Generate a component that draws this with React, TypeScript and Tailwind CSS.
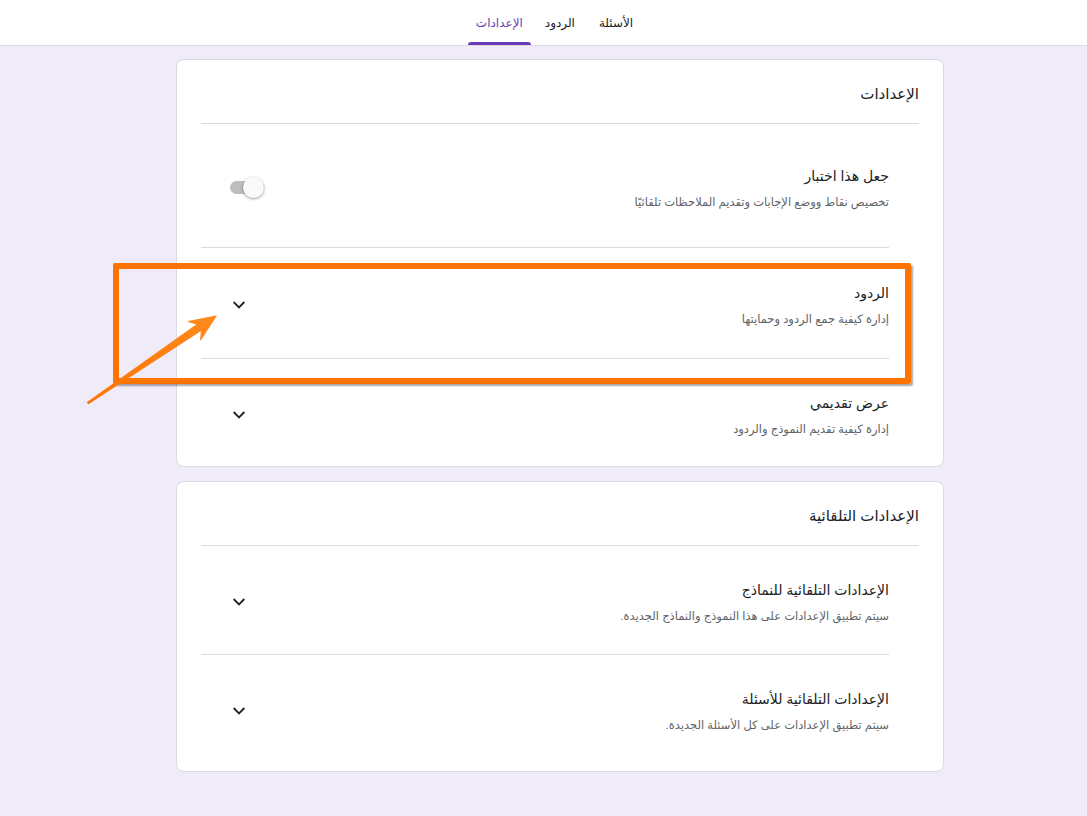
import React from "react";

const font = { fontFamily: '"Liberation Sans", "DejaVu Sans", sans-serif' };

const Chevron: React.FC = () => (
  <svg width="16" height="16" viewBox="0 0 24 24" fill="none">
    <path d="M5 8.5l7 7 7-7" stroke="#202124" strokeWidth="2.8" strokeLinecap="square" />
  </svg>
);

const Toggle: React.FC = () => (
  <div className="relative w-[38px] h-[22px] flex items-center">
    <div className="w-[34px] h-[13px] rounded-full bg-[#bdbdbd]" />
    <div className="absolute right-0 top-0 w-[21px] h-[21px] rounded-full bg-[#fafafa] shadow-[0_1px_3px_rgba(0,0,0,0.4)]" />
  </div>
);

interface RowProps {
  title: string;
  sub: string;
  height: string;
  toggle?: boolean;
  divider?: boolean;
}

const Row: React.FC<RowProps> = ({ title, sub, height, toggle, divider }) => (
  <div className={`flex flex-col ${height}`}>
    <div className="flex-1 flex items-center justify-between mr-[54px] ml-6">
      <div className="flex flex-col gap-[8px] pt-[4px]">
        <span className="text-[14px] text-[#202124] leading-[20px]">{title}</span>
        <span className="text-[11.5px] text-[#5f6368] leading-[16px]">{sub}</span>
      </div>
      <div className={toggle ? "ml-[25px] mt-[4px]" : "ml-[30px] mt-[4px]"}>
        {toggle ? <Toggle /> : <Chevron />}
      </div>
    </div>
    {divider && <div className="h-px bg-[#dadce0] mr-[54px] ml-6" />}
  </div>
);

const Card: React.FC<{ title: string; children: React.ReactNode }> = ({ title, children }) => (
  <div className="w-[768px] bg-white rounded-lg border border-[#dadce0]">
    <div className="h-[63px] flex items-center pr-6 pt-[6px]">
      <span className="text-[15px] text-[#202124]">{title}</span>
    </div>
    <div className="h-px bg-[#dadce0] mx-6" />
    {children}
  </div>
);

export default function App() {
  return (
    <div dir="rtl" style={font} className="relative min-h-[816px] bg-[#f0ebf8]">
      <div className="h-[46px] bg-white border-b border-[#dadce0] flex justify-center">
        <div className="flex items-end ml-[14px]">
          <span className="text-[12px] text-[#202124] mb-[13px]">الأسئلة</span>
          <span className="text-[12px] text-[#202124] mb-[13px] mr-[24px] ml-[14px]">الردود</span>
          <div className="flex flex-col items-center w-[63px]">
            <span className="text-[12px] text-[#673ab7] mb-[10px]">الإعدادات</span>
            <div className="h-[3px] w-full bg-[#673ab7] rounded-t" />
          </div>
        </div>
      </div>

      <div className="flex flex-col gap-[14px] mr-[143px] pt-[13px] pb-10">
        <Card title="الإعدادات">
          <Row
            title="جعل هذا اختبار"
            sub="تخصيص نقاط ووضع الإجابات وتقديم الملاحظات تلقائيًا"
            height="h-[124px]"
            toggle
            divider
          />
          <Row
            title="الردود"
            sub="إدارة كيفية جمع الردود وحمايتها"
            height="h-[111px]"
            divider
          />
          <Row title="عرض تقديمي" sub="إدارة كيفية تقديم النموذج والردود" height="h-[107px]" />
        </Card>

        <Card title="الإعدادات التلقائية">
          <Row
            title="الإعدادات التلقائية للنماذج"
            sub="سيتم تطبيق الإعدادات على هذا النموذج والنماذج الجديدة."
            height="h-[109px]"
            divider
          />
          <Row
            title="الإعدادات التلقائية للأسئلة"
            sub="سيتم تطبيق الإعدادات على كل الأسئلة الجديدة."
            height="h-[108px]"
          />
          <div className="h-[8px]" />
        </Card>
      </div>

      {/* annotation: highlight box */}
      <div className="absolute left-[113px] top-[263px] w-[798px] h-[121px] border-[6px] border-[#ff7300] rounded-[2px] shadow-[2px_2px_2px_rgba(0,0,0,0.35)] pointer-events-none" />

      {/* annotation: arrow */}
      <svg
        className="absolute left-0 top-0 pointer-events-none"
        width="1087"
        height="816"
        viewBox="0 0 1087 816"
      >
        <defs>
          <linearGradient id="arr" x1="88" y1="403" x2="216" y2="316" gradientUnits="userSpaceOnUse">
            <stop offset="0" stopColor="#ff7300" />
            <stop offset="1" stopColor="#ff8a1f" />
          </linearGradient>
        </defs>
        <polygon
          points="216,316 188.3,321.5 197.5,324.3 87.5,402.4 88.5,403.6 201.5,330.1 200.7,339.7"
          fill="url(#arr)"
          stroke="url(#arr)"
          strokeWidth="1.2"
          strokeLinejoin="round"
        />
      </svg>
    </div>
  );
}
